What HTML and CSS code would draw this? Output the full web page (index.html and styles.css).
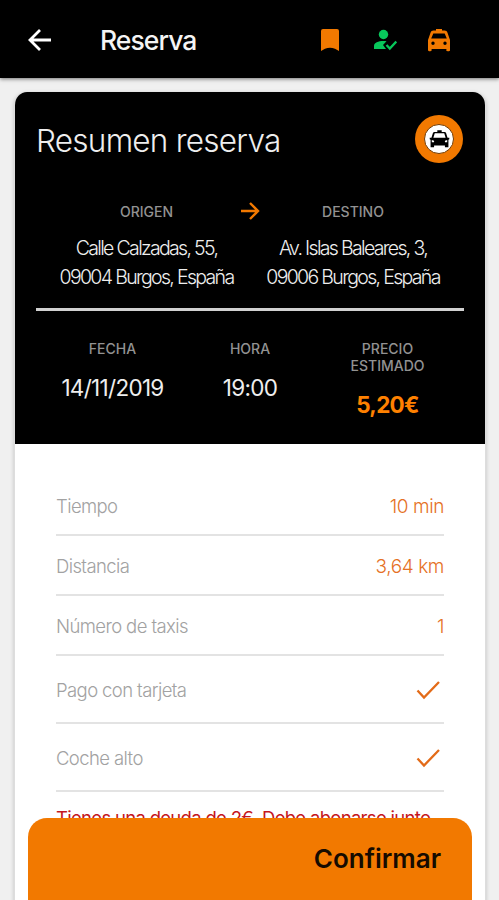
FILE: index.html
```html
<!DOCTYPE html>
<html lang="es">
<head>
<meta charset="utf-8">
<title>Reserva</title>
<link rel="stylesheet" href="styles.css">
</head>
<body>
<header class="bar">
  <svg class="back" viewBox="0 0 24 24"><path d="M23 12H2M12 2 2 12l10 10"/></svg>
  <h1 class="bar-title">Reserva</h1>
  <nav class="actions">
    <svg class="orange bookmark" viewBox="0 0 24 24"><path d="M5 1h14a2 2 0 0 1 2 2v20l-4-2.200q-5-2-10 0L3 23V3a2 2 0 0 1 2-2z"/></svg>
    <svg class="green" viewBox="0 0 24 24"><circle cx="10.500" cy="6.500" r="4.700"/><path d="M1 21v-3c0-3.300 4.200-5 9.500-5 1 0 2 .1 3 .3L10 17l3 4z"/><path class="tick" d="m13.500 17 3.300 3.500 6.500-7"/></svg>
    <svg class="orange" viewBox="0 0 24 24"><path fill-rule="evenodd" d="M9 1h6v1.500h2.500c1.500 0 2.500.8 3 2.200L23 12v10c0 .8-.4 1.200-1.200 1.200h-1.200c-.8 0-1.200-.4-1.200-1.200v-1H4.600v1c0 .8-.4 1.200-1.200 1.200H2.200C1.400 23.200 1 22.800 1 22V12l2.500-7.300c.5-1.400 1.500-2.200 3-2.200H9zM6.300 5.500 4.200 10.500h15.600l-2.100-5zM6 13.500a1.700 1.700 0 1 0 0 3.400 1.700 1.700 0 0 0 0-3.400zm12 0a1.700 1.700 0 1 0 0 3.400 1.700 1.700 0 0 0 0-3.400z"/></svg>
  </nav>
</header>
<main class="card">
  <section class="summary">
    <div class="heading">
      <h2 class="title">Resumen reserva</h2>
      <div class="badge"><div class="disc">
        <svg viewBox="0 0 24 24"><path fill-rule="evenodd" d="M9.500 2h5v2h3.300c.8 0 1.400.5 1.700 1.200l1.700 5.300 2 .1v1.600l-1 .6v8.600h-4v-2H5.800v2h-4v-8.600l-1-.6v-1.600l2-.1 1.700-5.300C4.800 4.500 5.400 4 6.200 4h3.300zM6.600 5.500 5 10.500h14l-1.600-5zM3.200 13v2.800h2.600V14zm17.600 0-2.600 1v1.800h2.600z"/></svg>
      </div></div>
    </div>
    <div class="route">
      <div class="place"><div class="label">ORIGEN</div><div class="address">Calle Calzadas, 55,<br>09004 Burgos, España</div></div>
      <svg class="arrow" viewBox="0 0 20 20"><path d="M1 10h17M10 2l8 8-8 8"/></svg>
      <div class="place"><div class="label">DESTINO</div><div class="address">Av. Islas Baleares, 3,<br>09006 Burgos, España</div></div>
    </div>
    <div class="facts">
      <div class="fact"><div class="label">FECHA</div><div class="value">14/11/2019</div></div>
      <div class="fact"><div class="label">HORA</div><div class="value">19:00</div></div>
      <div class="fact"><div class="label">PRECIO<br>ESTIMADO</div><div class="value price">5,20€</div></div>
    </div>
  </section>
  <section class="details">
    <div class="row"><span>Tiempo</span><span class="amount">10 min</span></div>
    <div class="row"><span>Distancia</span><span class="amount">3,64 km</span></div>
    <div class="row"><span>Número de taxis</span><span class="amount">1</span></div>
    <div class="row tall"><span>Pago con tarjeta</span><svg class="check" viewBox="0 0 24 20"><path d="m1.500 10.500 6.500 7L23 2"/></svg></div>
    <div class="row tall"><span>Coche alto</span><svg class="check" viewBox="0 0 24 20"><path d="m1.500 10.500 6.500 7L23 2"/></svg></div>
    <p class="debt">Tienes una deuda de 2€. Debe abonarse junto</p>
  </section>
</main>
<button class="confirm">Confirmar</button>
</body>
</html>
```
FILE: styles.css
```css
* { box-sizing: border-box; }
html, body { margin: 0; height: 900px; overflow: hidden; }
body { background: #f0f0f0; font-family: Inter, "Liberation Sans", sans-serif; }
h1, h2, p { margin: 0; font-weight: 400; }
svg { display: block; }

.bar { height: 78px; padding: 2px 48px 0 28px; display: flex; align-items: center; background: #000; color: #f4f4f4; box-shadow: 0 1px 4px #0008; }
.back { width: 24px; height: 24px; fill: none; stroke: #fff; stroke-width: 2.800; }
.bar-title { margin-left: 48px; font-size: 26.5px; font-weight: 450; letter-spacing: -.95px; line-height: 32px; }
.actions { margin-left: auto; display: flex; gap: 31px; }
.actions svg { width: 24px; height: 24px; }
.actions .bookmark { margin-right: 1px; margin-left: -2px; }
.actions svg:nth-child(2) { margin-right: -1px; margin-left: -1px; }
.orange { fill: #f27900; }
.green { fill: #08c75b; }
.tick { fill: none; stroke: #08c75b; stroke-width: 2.300; }

.card { height: 830px; margin: 14px 13px 0 14px; border: 1px solid #ddd; border-top: 0; border-radius: 13px 13px 0 0; background: #fff; overflow: hidden; box-shadow: 0 1px 4px #0003; }
.summary { height: 352px; padding: 23px 21px 0; background: #000; color: #eee; }
.heading { height: 48px; display: flex; align-items: center; justify-content: space-between; }
.title { padding-top: 3px; font-size: 31.5px; font-weight: 330; letter-spacing: -.75px; }
.badge { width: 48px; height: 48px; margin-right: 1px; display: grid; place-items: center; border-radius: 50%; background: #f27900; }
.disc { width: 30px; height: 30px; display: grid; place-items: center; border-radius: 50%; background: #fff; border: 1px solid #743b00; }
.disc svg { width: 21px; height: 22px; }
.label { color: #929292; font-size: 14px; font-weight: 500; line-height: 17px; }
.route { height: 148px; padding-top: 40px; display: grid; grid-template-columns: 199px 30px 199px; border-bottom: 3px solid #d1d1d1; text-align: center; }
.place:first-child { padding-left: 22px; }
.place:last-child { padding-right: 23px; }
.address { margin-top: 14px; font-size: 19.5px; font-weight: 350; line-height: 29px; letter-spacing: -1.67px; white-space: nowrap; }
.arrow { width: 20px; height: 20px; margin: -2px 0 0 5px; fill: none; stroke: #f27900; stroke-width: 2.400; }
.facts { padding: 29px 8px 0; display: grid; grid-template-columns: 137px 138px 137px; text-align: center; }
.value { margin-top: 17px; font-size: 22.5px; font-weight: 380; line-height: 28px; letter-spacing: -.7px; }
.price { color: #ff8100; font-weight: 700; }

.details { padding: 32px 41px 0; color: #a2a2a2; font-size: 18.5px; font-weight: 340; }
.row { height: 60px; padding-top: 2px; display: flex; align-items: center; justify-content: space-between; border-bottom: 2px solid #e3e3e3; letter-spacing: -.6px; }
.amount { color: #e57125; font-size: 19px; letter-spacing: -.4px; }
.tall { height: 68px; }
.check { width: 24px; height: 20px; margin-right: 4px; fill: none; stroke: #e36b18; stroke-width: 2.300; }
.debt { margin-top: 14px; color: #c51620; line-height: 24px; white-space: nowrap; letter-spacing: -.7px; }
.confirm { position: fixed; top: 818px; left: 28px; width: 444px; height: 100px; padding: 0 31px 20px; border: 0; border-radius: 19px 19px 0 0; background: #f27900; color: #160b00; font: 600 26px Inter, sans-serif; text-align: right; }
```
